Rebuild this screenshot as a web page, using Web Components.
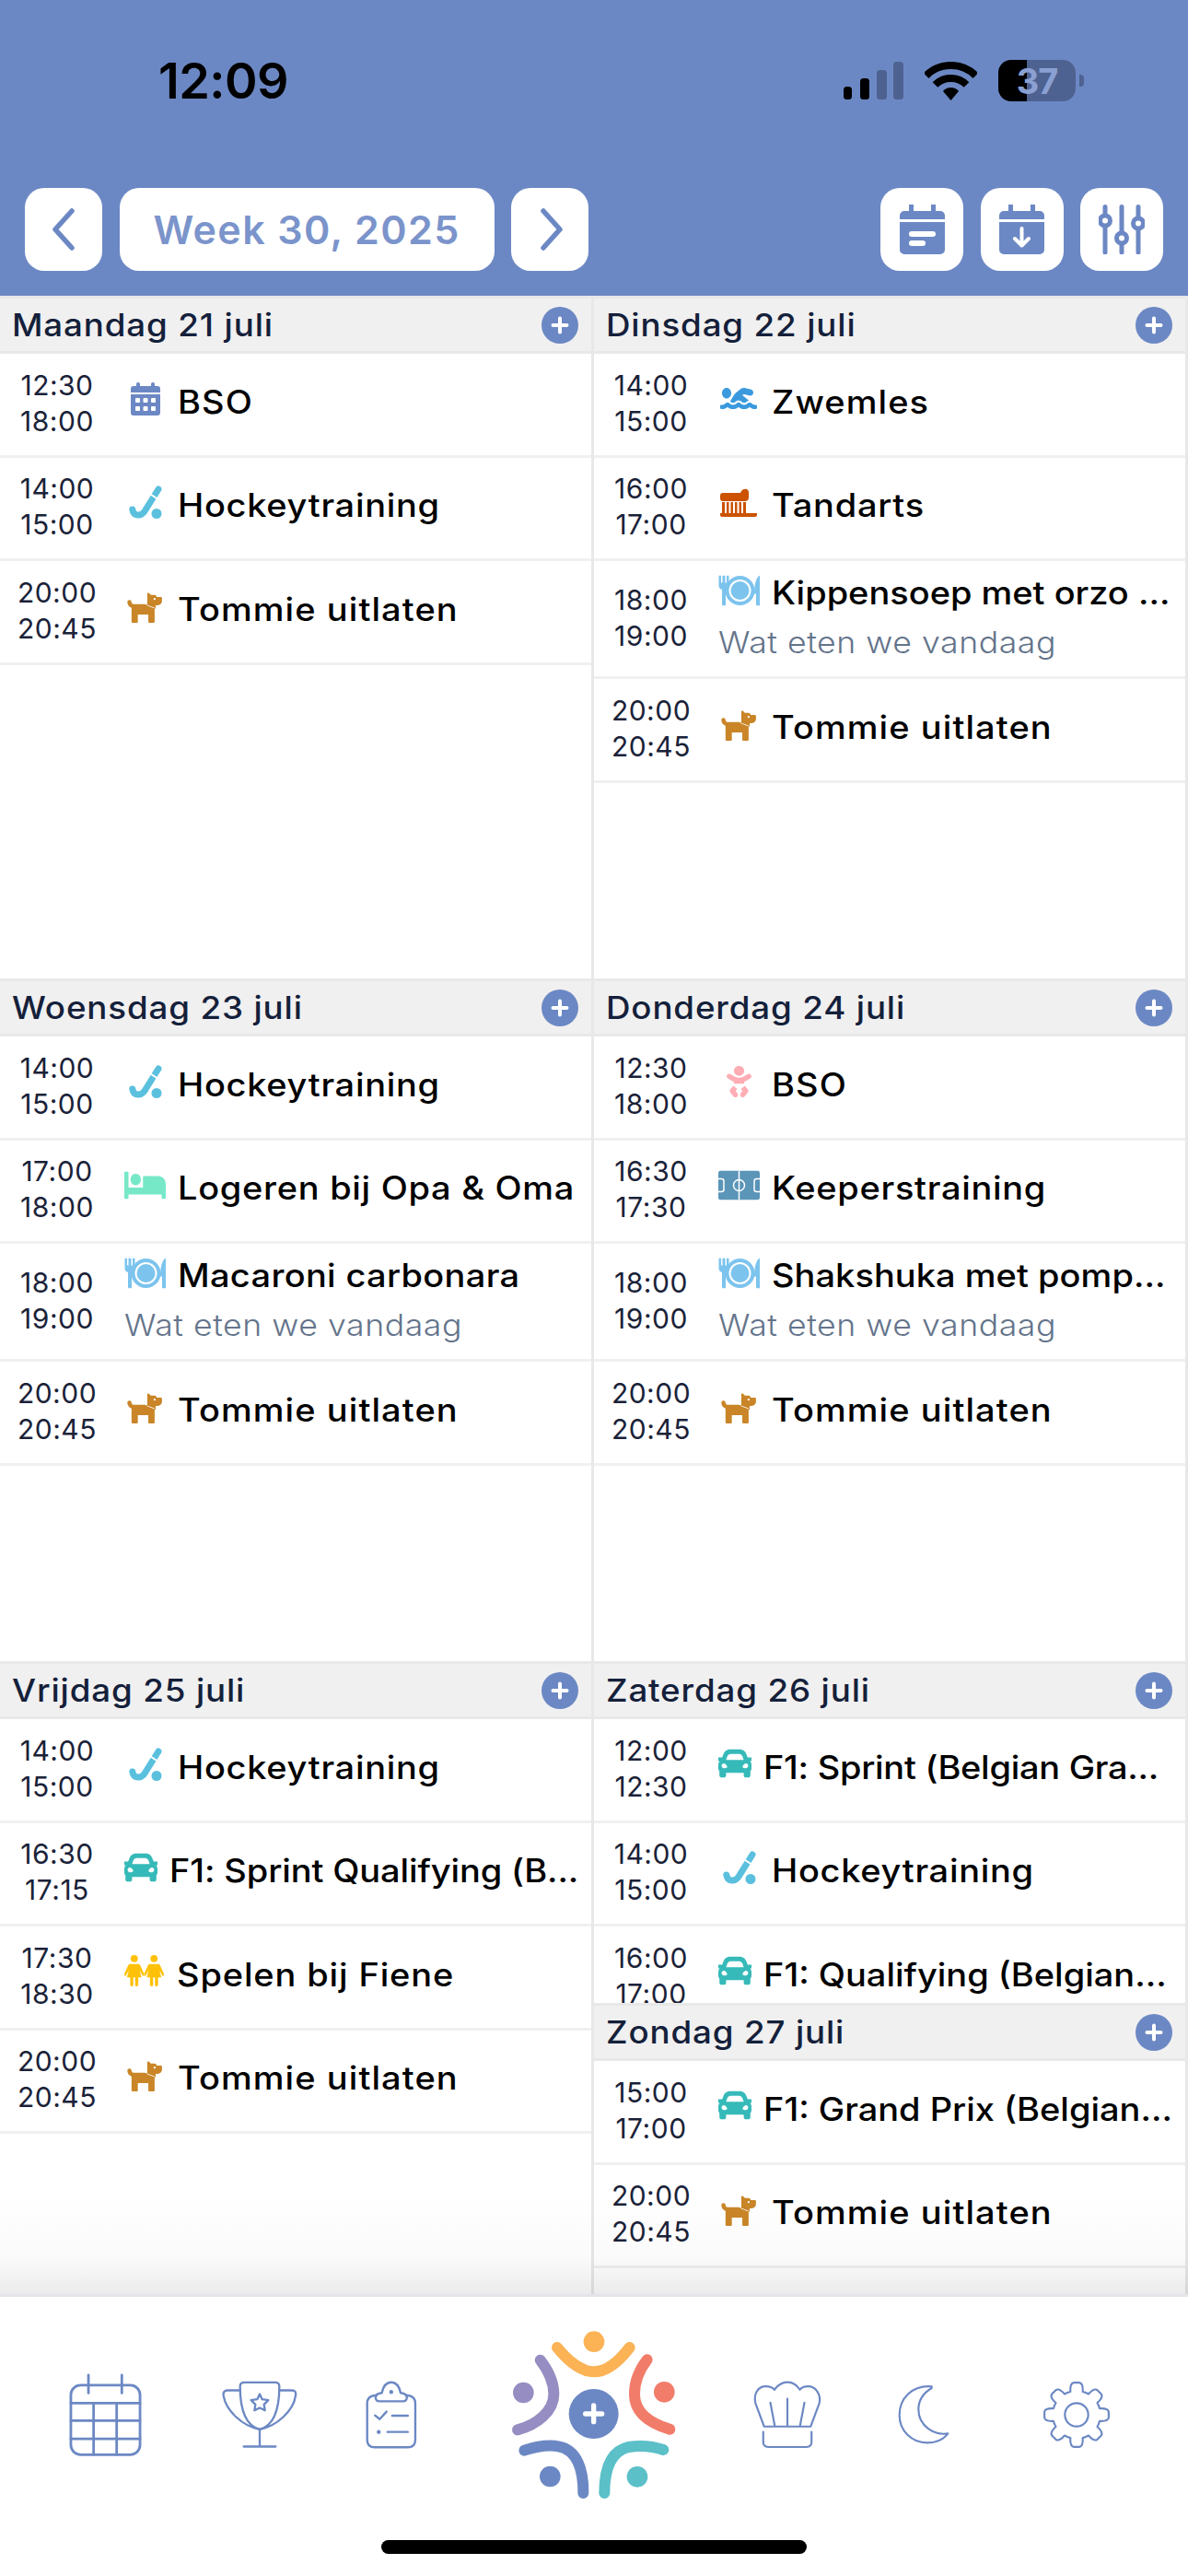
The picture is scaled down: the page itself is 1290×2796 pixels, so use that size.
<!DOCTYPE html>
<html lang="nl">
<head>
<meta charset="utf-8">
<title>Week 30, 2025</title>
<style>
  html, body { margin: 0; padding: 0; background: #fff; }
  body { width: 1290px; height: 2796px; overflow: hidden; font-family: Inter, "Liberation Sans", sans-serif; }
</style>
</head>
<body>
<family-app>
  <status-bar slot="top"></status-bar>
  <week-toolbar slot="top" label="Week 30, 2025"></week-toolbar>

  <day-card label="Maandag 21 juli">
    <agenda-item start="12:30" end="18:00" icon="calendar">BSO</agenda-item>
    <agenda-item start="14:00" end="15:00" icon="hockey" style="--track:.65px">Hockeytraining</agenda-item>
    <agenda-item start="20:00" end="20:45" icon="dog">Tommie uitlaten</agenda-item>
  </day-card>
  <day-card label="Dinsdag 22 juli">
    <agenda-item start="14:00" end="15:00" icon="swim">Zwemles</agenda-item>
    <agenda-item start="16:00" end="17:00" icon="brush" style="--track:.7px">Tandarts</agenda-item>
    <agenda-item start="18:00" end="19:00" icon="meal" tall style="--track:0px">Kippensoep met orzo ...<span slot="sub">Wat eten we vandaag</span></agenda-item>
    <agenda-item start="20:00" end="20:45" icon="dog">Tommie uitlaten</agenda-item>
  </day-card>
  <day-card label="Woensdag 23 juli">
    <agenda-item start="14:00" end="15:00" icon="hockey" style="--track:.65px">Hockeytraining</agenda-item>
    <agenda-item start="17:00" end="18:00" icon="bed" style="--track:.65px">Logeren bij Opa &amp; Oma</agenda-item>
    <agenda-item start="18:00" end="19:00" icon="meal" tall style="--track:.3px">Macaroni carbonara<span slot="sub">Wat eten we vandaag</span></agenda-item>
    <agenda-item start="20:00" end="20:45" icon="dog">Tommie uitlaten</agenda-item>
  </day-card>
  <day-card label="Donderdag 24 juli">
    <agenda-item start="12:30" end="18:00" icon="baby">BSO</agenda-item>
    <agenda-item start="16:30" end="17:30" icon="field" style="--track:.65px">Keeperstraining</agenda-item>
    <agenda-item start="18:00" end="19:00" icon="meal" tall style="--track:.05px">Shakshuka met pomp...<span slot="sub">Wat eten we vandaag</span></agenda-item>
    <agenda-item start="20:00" end="20:45" icon="dog">Tommie uitlaten</agenda-item>
  </day-card>
  <day-card label="Vrijdag 25 juli">
    <agenda-item start="14:00" end="15:00" icon="hockey" style="--track:.65px">Hockeytraining</agenda-item>
    <agenda-item start="16:30" end="17:15" icon="car" style="--track:-.1px">F1: Sprint Qualifying (B...</agenda-item>
    <agenda-item start="17:30" end="18:30" icon="kids" style="--track:.8px">Spelen bij Fiene</agenda-item>
    <agenda-item start="20:00" end="20:45" icon="dog">Tommie uitlaten</agenda-item>
  </day-card>
  <div class="stack">
    <day-card label="Zaterdag 26 juli" style="height:371px">
      <agenda-item start="12:00" end="12:30" icon="car" style="--track:-.25px">F1: Sprint (Belgian Gra...</agenda-item>
      <agenda-item start="14:00" end="15:00" icon="hockey" style="--track:.65px">Hockeytraining</agenda-item>
      <agenda-item start="16:00" end="17:00" icon="car" style="--track:0px">F1: Qualifying (Belgian...</agenda-item>
    </day-card>
    <day-card label="Zondag 27 juli" style="height:316px">
      <agenda-item start="15:00" end="17:00" icon="car" style="--track:0px">F1: Grand Prix (Belgian...</agenda-item>
      <agenda-item start="20:00" end="20:45" icon="dog">Tommie uitlaten</agenda-item>
    </day-card>
  </div>

  <tab-bar slot="bottom"></tab-bar>
</family-app>

<script>
const BLUE = "#6c88c4";

// event icons: box is the width the icon takes in the row, w/h the drawn size
const eventIcons = {
  calendar: { box: 45, gap: 13, w: 32, h: 36, up: 6, svg: `<svg viewBox="0 0 32 36" fill="#6c88c4"><rect x="6" width="4" height="8" rx="2"/><rect x="22" width="4" height="8" rx="2"/><path d="M3 4h26a3 3 0 0 1 3 3v4H0V7a3 3 0 0 1 3-3zM0 13h32v20a3 3 0 0 1-3 3H3a3 3 0 0 1-3-3z"/><g fill="#fff"><rect x="5" y="17" width="5" height="5" rx="1"/><rect x="13.5" y="17" width="5" height="5" rx="1"/><rect x="22" y="17" width="5" height="5" rx="1"/><rect x="5" y="26" width="5" height="5" rx="1"/><rect x="13.5" y="26" width="5" height="5" rx="1"/><rect x="22" y="26" width="5" height="5" rx="1"/></g></svg>` },
  hockey: { box: 45, gap: 13, w: 36, h: 36, up: 6, svg: `<svg viewBox="0 0 36 36"><path d="M32 4 17 28C13.500 33.500 5 34 3.800 26" fill="none" stroke="#5bc0de" stroke-width="7" stroke-linecap="round"/><path d="M23.500 9.500 31 14.500" stroke="#fff" stroke-width="2"/><circle cx="30" cy="30.500" r="5.500" fill="#5bc0de"/></svg>` },
  dog: { box: 43, gap: 15, w: 41, h: 36, up: 6, svg: `<svg viewBox="0 0 576 512" preserveAspectRatio="none" fill="#c98527"><path d="M298.06 224 448 277.55V496a16 16 0 0 1-16 16H368a16 16 0 0 1-16-16V384H192V496a16 16 0 0 1-16 16H112a16 16 0 0 1-16-16V282.09C58.84 268.84 32 233.66 32 192a32 32 0 0 1 64 0 32.06 32.06 0 0 0 32 32ZM544 112H480L472.84 97.69A32 32 0 0 0 444.22 80H390.58L363.3 52.72C353.22 42.64 336 49.78 336 64V250.33l128 45.72V240h32a64 64 0 0 0 64-64V128A16 16 0 0 0 544 112ZM448 160a16 16 0 1 1 16-16A16 16 0 0 1 448 160Z"/></svg>` },
  swim: { box: 43, gap: 15, w: 40, h: 23, up: 6, svg: `<svg viewBox="0 96 640 320" preserveAspectRatio="none" fill="#3b9ade"><path d="M189.61 310.58c3.54 3.26 15.27 9.42 34.39 9.42s30.86-6.16 34.39-9.42c16.02-14.77 34.5-22.58 53.46-22.58h16.3c18.96 0 37.44 7.81 53.46 22.58 3.54 3.26 15.27 9.42 34.39 9.42s30.86-6.16 34.39-9.42c14.86-13.71 31.88-21.12 49.39-22.16l-112.84-80.6 18-12.86c3.64-2.58 8.28-3.52 12.62-2.61l100.35 21.53c25.91 5.53 51.44-10.97 57-36.88 5.55-25.92-10.95-51.44-36.88-57L437.68 98.47c-30.73-6.58-63.02.12-88.56 18.38l-80.02 57.17c-10.38 7.39-19.36 16.44-26.72 26.94L173.75 299c5.47 3.23 10.82 6.93 15.86 11.58zM624 352h-16c-26.04 0-45.8-8.42-56.09-17.9-8.9-8.21-19.66-14.1-31.77-14.1h-16.3c-12.11 0-22.87 5.89-31.77 14.1C461.8 343.58 442.04 352 416 352s-45.8-8.42-56.09-17.9c-8.9-8.21-19.66-14.1-31.77-14.1h-16.3c-12.11 0-22.87 5.89-31.77 14.1C269.8 343.58 250.04 352 224 352s-45.8-8.42-56.09-17.9c-8.9-8.21-19.66-14.1-31.77-14.1h-16.3c-12.11 0-22.87 5.89-31.77 14.1C77.8 343.58 58.04 352 32 352H16c-8.84 0-16 7.16-16 16v32c0 8.84 7.16 16 16 16h16c38.62 0 72.72-12.19 96-31.84 23.28 19.66 57.38 31.84 96 31.84s72.72-12.19 96-31.84c23.28 19.66 57.38 31.84 96 31.84s72.72-12.19 96-31.84c23.29 19.66 57.38 31.84 96 31.84h16c8.84 0 16-7.16 16-16v-32c0-8.84-7.16-16-16-16zm-512-96c44.18 0 80-35.82 80-80s-35.82-80-80-80-80 35.82-80 80 35.82 80 80 80z"/></svg>` },
  brush: { box: 43, gap: 15, w: 40, h: 31, up: 6, svg: `<svg viewBox="0 0 40 31" fill="#cc5200"><path d="M3 5H22C23 1 27 0 29 1C31 2 31.5 5 31 8V10C31 13 29 14 27 14H3C1 14 0 13 0 11V8C0 6 1 5 3 5Z"/><rect x="2" y="15" width="3" height="13"/><rect x="7" y="15" width="2.5" height="13"/><rect x="11.5" y="15" width="2.5" height="13"/><rect x="16" y="15" width="2.5" height="13"/><rect x="20.5" y="15" width="2.5" height="13"/><rect x="25" y="15" width="3" height="13"/><path d="M0 27H40V29Q40 31 38 31H2Q0 31 0 29Z"/></svg>` },
  meal: { box: 45, gap: 13, w: 45, h: 33, up: 4.5, svg: `<svg viewBox="0 0 45 33" fill="#7cc4ee"><path d="M.5 0H3V8H4.5V0H7.5V8H9V0H11.5V11C11.5 14 9.5 15 8 15.500V31.500A1.500 1.500 0 0 1 6.500 33H5.500A1.500 1.500 0 0 1 4 31.500V15.500C2.500 15 .5 14 .5 11Z"/><path d="M45 0C41 2 39 10 39 20H41V31.500A1.500 1.500 0 0 0 42.500 33H45Z"/><path d="M23.500 .500A16 16 0 1 1 23.500 32.500A16 16 0 1 1 23.500 .500ZM23.500 4.500A12 12 0 1 0 23.500 28.500A12 12 0 1 0 23.500 4.500Z"/><circle cx="23.500" cy="16.500" r="10"/></svg>` },
  bed: { box: 45, gap: 13, w: 45, h: 30, up: 5.5, svg: `<svg viewBox="0 64 640 384" preserveAspectRatio="none" fill="#76e8c8"><path d="M176 256c44.11 0 80-35.89 80-80s-35.89-80-80-80-80 35.89-80 80 35.89 80 80 80zm352-128H304c-8.84 0-16 7.16-16 16v144H64V80c0-8.84-7.16-16-16-16H16C7.160 64 0 71.160 0 80v352c0 8.840 7.160 16 16 16h32c8.840 0 16-7.160 16-16v-48h512v48c0 8.840 7.160 16 16 16h32c8.840 0 16-7.160 16-16V240c0-61.860-50.140-112-112-112z"/></svg>` },
  field: { box: 45, gap: 13, w: 45, h: 32, up: 5.5, svg: `<svg viewBox="0 0 45 32"><rect width="45" height="32" rx="3" fill="#5b95b8"/><g fill="none" stroke="#fff" stroke-width="1.500"><path d="M22.500 0V32"/><circle cx="22.500" cy="16" r="6"/><path d="M0 9H3.500Q6 9 6 11.500V20.500Q6 23 3.500 23H0"/><path d="M45 9H41.500Q39 9 39 11.500V20.500Q39 23 41.500 23H45"/></g></svg>` },
  baby: { box: 45, gap: 13, w: 27, h: 34, up: 6, svg: `<svg viewBox="0 0 384 512" preserveAspectRatio="none" fill="#ffadb5"><path d="M192 160c44.2 0 80-35.8 80-80S236.200 0 192 0s-80 35.800-80 80 35.800 80 80 80zm-53.400 248.800l25.600-32-61.500-51.200L56.800 383c-11.400 14.200-11.700 34.400-.8 49l48 64c7.900 10.500 19.900 16 32 16 8.300 0 16.800-2.600 24-8 17.700-13.200 21.200-38.300 8-56l-29.400-39.200zm142.700-83.200l-61.500 51.200 25.600 32L216 448c-13.200 17.700-9.700 42.800 8 56 7.200 5.400 15.600 8 24 8 12.200 0 24.200-5.500 32-16l48-64c10.900-14.600 10.600-34.800-.8-49l-45.900-57.400zM376.700 145c-12.700-18.100-37.600-22.400-55.700-9.800l-40.600 28.500c-52.700 37-124.200 37-176.800 0L63 135.300C44.900 122.600 20 127 7.300 145-5.400 163.100-1 188 17 200.700l40.600 28.500c17 11.900 35.400 20.900 54.400 27.900V288h160v-30.800c19-7 37.400-16 54.400-27.900l40.600-28.500c18.100-12.800 22.400-37.700 9.700-55.800z"/></svg>` },
  car: { box: 36, gap: 13, w: 36, h: 31, up: 6.5, svg: `<svg viewBox="16 64 480 384" preserveAspectRatio="none" fill="#36bab9"><path d="M499.990 176h-59.870l-16.640-41.600C406.380 91.630 365.570 64 319.500 64h-127c-46.060 0-86.880 27.630-103.990 70.400L71.870 176H12.010C4.200 176-1.530 183.340.370 190.910l6 24C7.700 220.250 12.500 224 18.010 224h20.070C24.650 235.730 16 252.780 16 272v48c0 16.120 6.160 30.670 16 41.930V416c0 17.670 14.330 32 32 32h32c17.670 0 32-14.330 32-32v-32h256v32c0 17.670 14.330 32 32 32h32c17.670 0 32-14.330 32-32v-54.070c9.840-11.250 16-25.800 16-41.930v-48c0-19.220-8.650-36.270-22.070-48H494c5.510 0 10.310-3.750 11.640-9.090l6-24c1.890-7.570-3.840-14.910-11.650-14.910zm-352.060-17.830c7.290-18.220 24.940-30.170 44.570-30.170h127c19.630 0 37.280 11.950 44.570 30.170L384 208H128l19.930-49.830zM96 319.800c-19.200 0-32-12.760-32-31.900S76.800 256 96 256s48 28.710 48 47.850-28.800 15.950-48 15.950zm320 0c-19.200 0-48 3.190-48-15.950S396.800 256 416 256s32 12.760 32 31.900-12.800 31.900-32 31.900z"/></svg>` },
  kids: { box: 43, gap: 14, w: 44, h: 35, up: 6.5, svg: `<svg viewBox="0 0 44 35" fill="#ffc107"><circle cx="11" cy="4" r="4"/><path d="M6 10H16Q17 10 18 12L22 21Q22.500 23 20.500 23.500L17 17L19 25H15.500V33Q15.500 35 13.500 35Q12 35 12 33V25H10V33Q10 35 8.500 35Q6.500 35 6.500 33V25H3L5 17L1.500 23.500Q-.5 23 0 21L4 12Q5 10 6 10Z"/><g transform="translate(22 0)"><circle cx="11" cy="4" r="4"/><path d="M6 10H16Q17 10 18 12L22 21Q22.500 23 20.500 23.500L17 17L19 25H15.500V33Q15.500 35 13.500 35Q12 35 12 33V25H10V33Q10 35 8.500 35Q6.500 35 6.500 33V25H3L5 17L1.500 23.500Q-.5 23 0 21L4 12Q5 10 6 10Z"/></g></svg>` }
};

// 8 teeth around a ring, top tooth straight up
function gearPath(cx, cy, rOut, rIn) {
  let d = "";
  for (let i = 0; i < 8; i++) {
    const a = -90 + i * 45;
    const pt = (deg, r) => {
      const t = deg * Math.PI / 180;
      return (cx + r * Math.cos(t)).toFixed(1) + " " + (cy + r * Math.sin(t)).toFixed(1);
    };
    d += (i ? "L" : "M") + pt(a - 15, rIn) + "Q" + pt(a - 12, rOut) + " " + pt(a - 5, rOut);
    d += "L" + pt(a + 5, rOut) + "Q" + pt(a + 12, rOut) + " " + pt(a + 15, rIn);
    d += "A" + rIn + " " + rIn + " 0 0 1 " + pt(a + 30, rIn);
  }
  return d + "Z";
}

class FamilyApp extends HTMLElement {
  constructor() {
    super();
    this.attachShadow({ mode: "open" });
    this.shadowRoot.innerHTML = `
      <style>
        :host { display: flex; flex-direction: column; width: 1290px; height: 2796px; position: relative; color: #14203a; }
        .head { background: ${BLUE}; height: 321px; }
        .grid { display: grid; grid-template-columns: 645px 645px; grid-template-rows: 741px 741px 687px; position: relative; }
        .fade { position: absolute; left: 0; right: 0; bottom: 0; height: 110px; pointer-events: none;
                background: linear-gradient(to bottom, rgba(0,0,0,0), rgba(0,0,0,.02) 65%, rgba(0,0,0,.08)); }
        .line { height: 3px; background: #e4e4ea; }
      </style>
      <div class="head"><slot name="top"></slot></div>
      <div class="grid"><slot></slot><div class="fade"></div></div>
      <div class="line"></div>
      <slot name="bottom"></slot>
    `;
  }
}

class StatusBar extends HTMLElement {
  constructor() {
    super();
    this.attachShadow({ mode: "open" });
    this.shadowRoot.innerHTML = `
      <style>
        :host { display: flex; align-items: center; justify-content: space-between; height: 175px; padding: 0 113px 0 172px; color: #000; }
        .time { font: 600 54px/1 Inter, sans-serif; letter-spacing: -.6px; }
        .icons { display: flex; align-items: center; }
        svg { display: block; }
        .wifi { margin: 0 23px 0 23px; }
        .batt { display: flex; align-items: center; justify-content: center; width: 84px; height: 45px; border-radius: 14px;
                background: linear-gradient(90deg, #000 37%, #4e6291 37%); color: #8aa0d2;
                font: 700 38px/1 Inter, sans-serif; letter-spacing: -1px; }
        .nub { width: 5px; height: 13px; margin-left: 4px; border-radius: 0 4px 4px 0; background: #4e6291; }
      </style>
      <span class="time">12:09</span>
      <span class="icons">
        <svg width="65" height="41" viewBox="0 0 65 41"><rect y="27" width="9" height="14" rx="3.500"/><rect x="18" y="18" width="10" height="23" rx="3.500"/><g fill="#4e6291"><rect x="36" y="9" width="11" height="32" rx="3.500"/><rect x="54" width="11" height="41" rx="3.500"/></g></svg>
        <svg class="wifi" width="57" height="42" viewBox="0 0 57 42"><g fill="none" stroke="#000" stroke-width="8"><path d="M1.600 15.100A38 38 0 0 1 55.400 15.100"/><path d="M11.500 25A24 24 0 0 1 45.500 25"/></g><path d="M28.500 42 20 32A11 11 0 0 1 37 32Z"/></svg>
        <span class="batt">37</span><span class="nub"></span>
      </span>
    `;
  }
}

class WeekToolbar extends HTMLElement {
  constructor() {
    super();
    this.attachShadow({ mode: "open" });
    const cal = `<path d="M10 0h5v7h19V0h5v7h5a5 5 0 0 1 5 5v4H0v-4a5 5 0 0 1 5-5h5zM0 19h49v30a5 5 0 0 1-5 5H5a5 5 0 0 1-5-5z" fill="${BLUE}"/>`;
    this.shadowRoot.innerHTML = `
      <style>
        :host { display: flex; justify-content: space-between; padding: 29px 27px 27px; height: 90px; }
        .group { display: flex; gap: 18.500px; }
        .btn { display: flex; align-items: center; justify-content: center; height: 90px; width: 90px; background: #fff; border-radius: 21px; box-sizing: border-box; }
        .nav { width: 84px; }
        .week { width: 407px; color: #7b94cb; font: 600 43px/1 Inter, sans-serif; letter-spacing: 1.400px; }
        svg { display: block; }
      </style>
      <div class="group">
        <div class="btn nav"><svg width="30" height="48" viewBox="0 0 30 48"><path d="M24 4 6 24 24 44" fill="none" stroke="${BLUE}" stroke-width="5.500" stroke-linecap="round" stroke-linejoin="round"/></svg></div>
        <div class="btn week">${this.getAttribute("label")}</div>
        <div class="btn nav"><svg width="30" height="48" viewBox="0 0 30 48" style="margin-left:3px"><path d="M6 4 24 24 6 44" fill="none" stroke="${BLUE}" stroke-width="5.500" stroke-linecap="round" stroke-linejoin="round"/></svg></div>
      </div>
      <div class="group">
        <div class="btn"><svg width="49" height="54" viewBox="0 0 49 54">${cal}<rect x="10" y="29" width="29" height="6" rx="3" fill="#fff"/><rect x="10" y="39" width="18" height="6" rx="3" fill="#fff"/></svg></div>
        <div class="btn"><svg width="49" height="54" viewBox="0 0 49 54">${cal}<path d="M24.500 26V44M17 37l7.500 7.500L32 37" fill="none" stroke="#fff" stroke-width="4" stroke-linecap="round" stroke-linejoin="round"/></svg></div>
        <div class="btn"><svg width="50" height="54" viewBox="0 0 50 54"><g fill="none" stroke="${BLUE}" stroke-width="5" stroke-linecap="round"><path d="M7 2.500V11M7 24V52"/><circle cx="7" cy="17.500" r="5.500"/><path d="M25 2.500V30M25 43V52"/><circle cx="25" cy="36.500" r="5.500"/><path d="M43 2.500V14M43 27V52"/><circle cx="43" cy="20.500" r="5.500"/></g></svg></div>
      </div>
    `;
  }
}

class DayCard extends HTMLElement {
  constructor() {
    super();
    this.attachShadow({ mode: "open" });
    this.shadowRoot.innerHTML = `
      <style>
        :host { display: block; box-sizing: border-box; width: 645px; height: 100%; overflow: hidden; background: #fff; border-right: 3px solid #e8e8e8; }
        .head { display: flex; align-items: center; justify-content: space-between; box-sizing: border-box; height: 63px; padding: 0 14px 0 13px;
                background: #f0f0f0; border-top: 3px solid #e8e8e8; border-bottom: 3px solid #e8e8e8; }
        .name { font: 500 34px/1 Inter, sans-serif; letter-spacing: .8px; color: #14203a; transform: scaleX(1.08); transform-origin: left center; white-space: nowrap; }
        svg { display: block; }
      </style>
      <div class="head">
        <span class="name">${this.getAttribute("label")}</span>
        <svg width="40" height="40" viewBox="0 0 40 40"><circle cx="20" cy="20" r="20" fill="${BLUE}"/><path d="M20 12.500V27.500M12.500 20H27.500" stroke="#fff" stroke-width="4" stroke-linecap="round"/></svg>
      </div>
      <slot></slot>
    `;
  }
}

class AgendaItem extends HTMLElement {
  constructor() {
    super();
    this.attachShadow({ mode: "open" });
    const icon = eventIcons[this.getAttribute("icon")];
    this.shadowRoot.innerHTML = `
      <style>
        :host { display: flex; align-items: center; box-sizing: border-box; height: 112.500px; border-bottom: 3px solid #f0f0f0; }
        :host([tall]) { height: 128px; }
        .times { flex: none; width: 124px; text-align: center; font: 400 30px/39px Inter, sans-serif; letter-spacing: .5px; color: #1a2238; }
        .times div { transform: translateY(-1px); }
        .body { flex: 1; min-width: 0; margin-left: 11px; }
        .line { display: flex; align-items: center; gap: ${icon.gap}px; height: 50px; }
        .icon { flex: none; display: flex; justify-content: center; width: ${icon.box}px; transform: translateY(-${icon.up}px); }
        .icon svg { display: block; width: ${icon.w}px; height: ${icon.h}px; }
        .label { font: 500 35px/50px Inter, sans-serif; letter-spacing: var(--track, 1px); color: #000; white-space: nowrap;
                 transform: translateY(-3px) scaleX(1.085); transform-origin: left center; }
        .sub { display: block; margin-top: 2px; font: 300 33px/50px Inter, sans-serif; letter-spacing: .5px; color: #64748b; white-space: nowrap;
               transform: translateY(-1px) scaleX(1.08); transform-origin: left center; }
        :host(:not([tall])) .sub { display: none; }
      </style>
      <div class="times"><div>${this.getAttribute("start")}</div><div>${this.getAttribute("end")}</div></div>
      <div class="body">
        <div class="line"><span class="icon">${icon.svg}</span><span class="label"><slot></slot></span></div>
        <span class="sub"><slot name="sub"></slot></span>
      </div>
    `;
  }
}

class TabBar extends HTMLElement {
  constructor() {
    super();
    this.attachShadow({ mode: "open" });
    const s = `fill="none" stroke="${BLUE}" stroke-linecap="round" stroke-linejoin="round"`;
    this.shadowRoot.innerHTML = `
      <style>
        :host { display: block; background: #fff; }
        .row { display: grid; grid-template-columns: 228px 108px 178px 262px 158px 138px 194px; height: 256px; align-items: center; justify-items: center; }
        svg { display: block; }
        .home { width: 462px; height: 15px; margin: 8px auto 0; border-radius: 8px; background: #000; }
      </style>
      <div class="row">
        <svg width="84" height="96" viewBox="215 335 255 285" ${s} stroke-width="8.500"><rect x="230" y="380" width="228" height="229" rx="32"/><path d="M288 347V406M398 347V406M230 439H458M230 497H458M230 557H458M305 439V609M381 439V609"/></svg>
        <svg width="84" height="76" viewBox="719 365 252 225" ${s} stroke-width="7"><path d="M781 385Q781 372 795 372H895Q909 372 909 385C909 440 900 510 845 525C790 510 781 440 781 385Z"/><path d="M781 398H740Q725 398 727 415C735 465 790 515 845 525C900 515 955 465 962 415Q965 398 950 398H909"/><path d="M845 525V580M793 581H897"/><path d="M845 410 853 427 873 430 859 444 862 463 845 455 828 463 831 444 817 430 837 427Z"/></svg>
        <svg width="56" height="74" viewBox="1193 367 165 218" ${s} stroke-width="7"><path d="M1228 414H1222Q1198 416 1198 440V556Q1198 580 1222 580H1328Q1352 580 1352 556V440Q1352 416 1328 414H1322"/><path d="M1238 433H1312Q1325 433 1325 420Q1325 408 1305 406Q1298 372 1275 372Q1252 372 1245 406Q1225 408 1225 420Q1225 433 1238 433Z"/><path d="M1223 478 1238 490 1260 466M1278 479H1328M1263 531H1328"/><circle cx="1275" cy="403" r="3" fill="${BLUE}"/><circle cx="1235" cy="531" r="3" fill="${BLUE}"/></svg>
        <svg width="183.300" height="188.300" viewBox="160 110 550 565" fill="none" stroke-width="36" stroke-linecap="round">
          <circle cx="436" cy="154" r="34" fill="#fbb356"/><path d="M316 173C350 215 395 252 436 252C478 252 520 215 552 173" stroke="#fbb356"/>
          <circle cx="206" cy="320" r="34" fill="#968dc2"/><path d="M261 214C295 258 305 290 305 325C305 380 250 425 187 441" stroke="#968dc2"/>
          <circle cx="665" cy="318" r="34" fill="#f27c6a"/><path d="M609 213C580 250 568 290 568 325C568 385 620 420 683 439" stroke="#f27c6a"/>
          <circle cx="293" cy="593" r="34" fill="${BLUE}"/><path d="M209 508C250 495 290 490 320 495C380 505 402 570 401 647" stroke="${BLUE}"/>
          <circle cx="577" cy="594" r="34" fill="#5bc0c8"/><path d="M662 506C620 492 580 492 550 497C490 510 470 570 470 647" stroke="#5bc0c8"/>
          <circle cx="435" cy="389" r="81" fill="${BLUE}"/><path d="M408 389H462M435 362V415" stroke="#fff" stroke-width="16"/>
        </svg>
        <svg width="76" height="74" viewBox="82 367 226 220" ${s} stroke-width="6.500"><path d="M120 515H270L298 440C305 410 285 385 262 385C250 385 240 390 235 396C225 380 210 372 195 372C180 372 165 380 153 396C148 390 135 385 125 385C100 385 85 410 92 440Z"/><path d="M140 438 154 512M195 425V512M250 438 236 512"/><path d="M117 532V565Q117 581 133 581H257Q273 581 273 565V532"/></svg>
        <svg width="58" height="66" viewBox="552 378 174 198" ${s} stroke-width="6.500"><path d="M665 385C600 380 560 425 560 478C560 530 600 568 650 568C680 568 705 555 718 538C675 545 622 515 622 460C622 425 640 405 665 390Z"/></svg>
        <svg width="76" height="76" viewBox="1023 363 228 228" ${s} stroke-width="6.500"><path d="${gearPath(1137, 477, 105, 78)}"/><circle cx="1137" cy="477" r="38"/></svg>
      </div>
      <div class="home"></div>
    `;
  }
}

customElements.define("family-app", FamilyApp);
customElements.define("status-bar", StatusBar);
customElements.define("week-toolbar", WeekToolbar);
customElements.define("day-card", DayCard);
customElements.define("agenda-item", AgendaItem);
customElements.define("tab-bar", TabBar);
</script>
</body>
</html>
